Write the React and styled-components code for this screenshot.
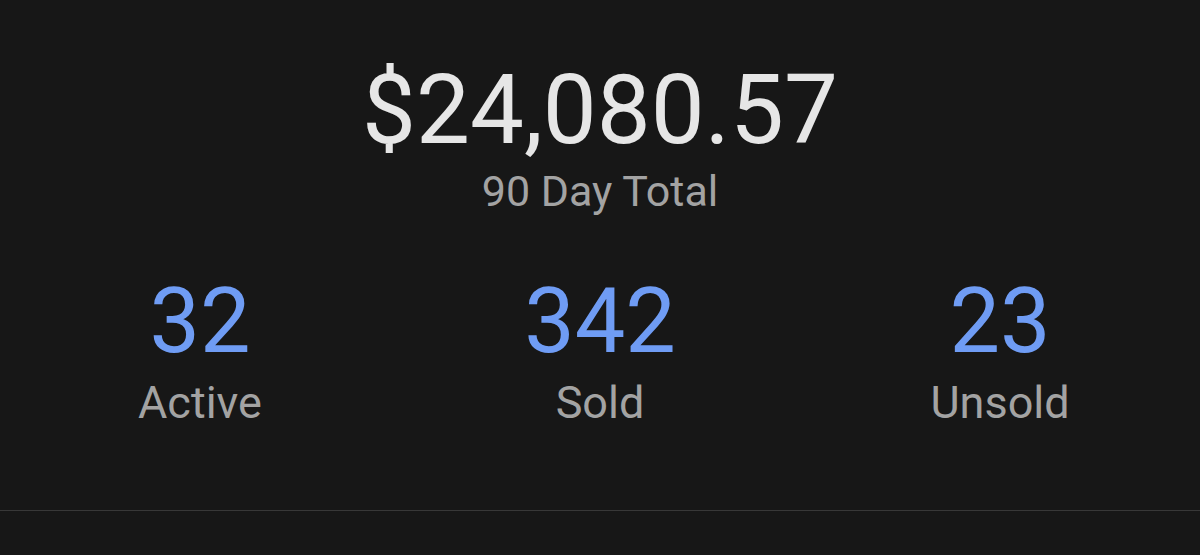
import styled, { createGlobalStyle } from 'styled-components';

const GlobalStyle = createGlobalStyle`
  html, body {
    margin: 0;
    padding: 0;
    background: #171717;
  }
  body {
    font-family: Roboto, "Open Sans", sans-serif;
  }
`;

const Page = styled.div`
  width: 1200px;
  height: 555px;
  background: #171717;
  display: flex;
  flex-direction: column;
`;

const Summary = styled.div`
  display: flex;
  flex-direction: column;
  align-items: center;
  padding-top: 55px;
`;

const Amount = styled.div`
  font-size: 96px;
  line-height: 110px;
  color: #e6e6e6;
`;

const Caption = styled.div`
  font-size: 43px;
  line-height: 50px;
  color: #a3a3a3;
  margin-top: 1px;
`;

const Stats = styled.div`
  display: grid;
  grid-template-columns: repeat(3, 1fr);
  margin-top: 56px;
`;

const Stat = styled.div`
  display: flex;
  flex-direction: column;
  align-items: center;
`;

const Count = styled.div`
  font-size: 90px;
  line-height: 100px;
  color: #6f9cf4;
`;

const Label = styled.div`
  font-size: 45px;
  line-height: 52px;
  color: #a3a3a3;
  margin-top: 5px;
`;

const Divider = styled.div`
  margin-top: auto;
  margin-bottom: 44px;
  height: 1px;
  background: #383838;
`;

const stats = [
  { value: 32, label: 'Active' },
  { value: 342, label: 'Sold' },
  { value: 23, label: 'Unsold' },
];

export default function App() {
  return (
    <Page>
      <GlobalStyle />
      <Summary>
        <Amount>$24,080.57</Amount>
        <Caption>90 Day Total</Caption>
      </Summary>
      <Stats>
        {stats.map((s) => (
          <Stat key={s.label}>
            <Count>{s.value}</Count>
            <Label>{s.label}</Label>
          </Stat>
        ))}
      </Stats>
      <Divider />
    </Page>
  );
}
